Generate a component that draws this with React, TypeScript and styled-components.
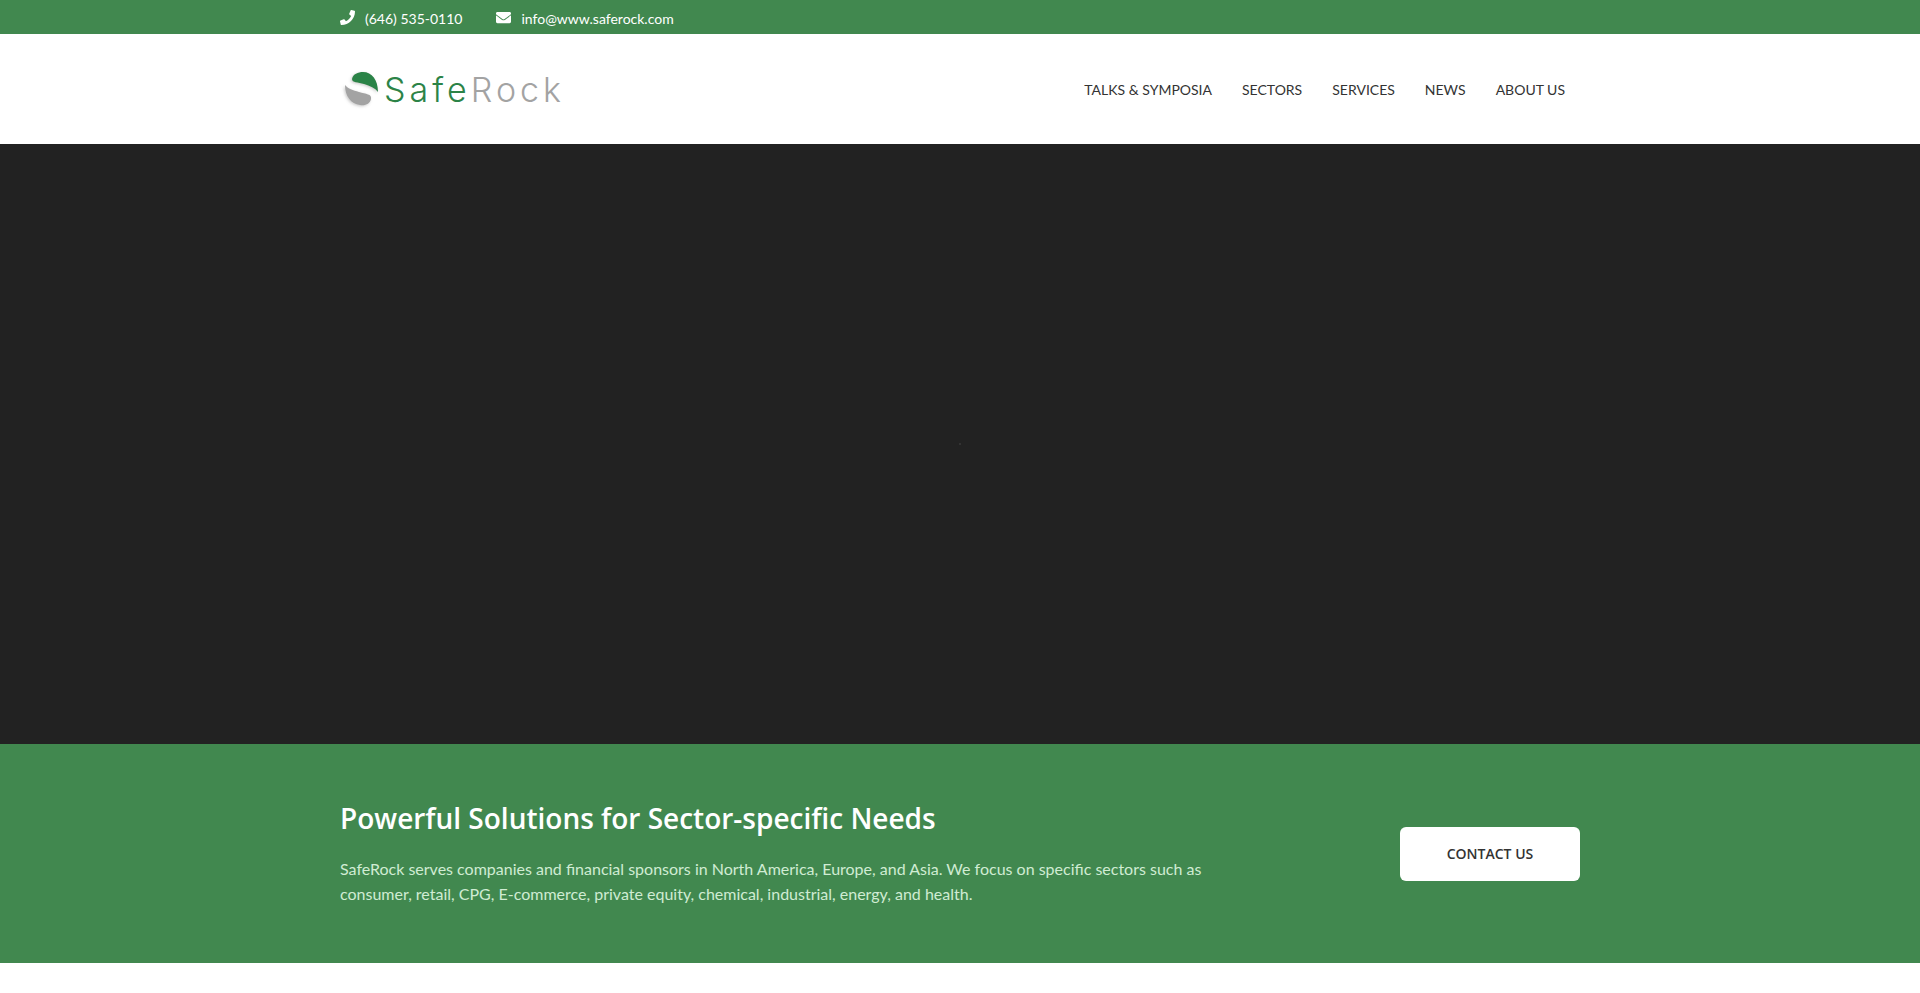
import React from "react";
import styled, { createGlobalStyle } from "styled-components";
import { FaEnvelope, FaPhone } from "react-icons/fa";

const GlobalStyle = createGlobalStyle`
  *, *::before, *::after { box-sizing: border-box; }
  body {
    margin: 0;
    background: #fff;
    color: #333;
    font-family: Lato, "Liberation Sans", sans-serif;
    font-size: 16px;
  }
`;

const Container = styled.div`
  max-width: 1240px;
  width: 100%;
  margin: 0 auto;
  display: flex;
  align-items: center;
`;

const TopBar = styled.div`
  background: #41884f;
`;

const ContactList = styled(Container)`
  height: 34px;
  gap: 34px;
`;

const ContactLink = styled.a`
  display: flex;
  align-items: center;
  gap: 10px;
  color: #fff;
  font-size: 14px;
  line-height: 24px;
  text-decoration: none;

  svg {
    width: 15px;
    height: 15px;
  }

  span {
    padding-top: 4px;
  }
`;

const Header = styled.header`
  background: #fff;
`;

const HeaderInner = styled(Container)`
  min-height: 110px;
  justify-content: space-between;
`;

const Logo = styled.a`
  display: flex;
  align-items: center;
  text-decoration: none;
`;

const Wordmark = styled.span<{ $tone: string }>`
  padding-top: 2px;
  color: ${({ $tone }) => $tone};
  font-family: Inter, "Liberation Sans", sans-serif;
  font-size: 34px;
  font-weight: 300;
  line-height: 40px;
  letter-spacing: 4px;
`;

const Nav = styled.nav`
  display: flex;
  padding-top: 2px;
`;

const NavLink = styled.a`
  padding: 0 15px;
  color: #333;
  font-size: 14px;
  line-height: 24px;
  text-transform: uppercase;
  text-decoration: none;
`;

const Hero = styled.section`
  display: flex;
  align-items: center;
  justify-content: center;
  min-height: 600px;
  background: #222;
`;

const Loader = styled.span`
  width: 2px;
  height: 2px;
  border-radius: 50%;
  background: #3a3a3a;
`;

const CallToAction = styled.section`
  background: #41884f;
`;

const CallInner = styled(Container)`
  padding: 54px 0;
  justify-content: space-between;
`;

const CallText = styled.div`
  max-width: 900px;
`;

const CallTitle = styled.h2`
  margin: 0 0 18px;
  color: #fff;
  font-family: "Open Sans", "Noto Sans", sans-serif;
  font-size: 28px;
  font-weight: 600;
  line-height: 40px;
`;

const CallCopy = styled.p`
  margin: 0 0 3px;
  color: #d0ecd3;
  font-size: 16px;
  line-height: 25px;
`;

const Button = styled.button`
  width: 180px;
  height: 54px;
  border: 0;
  border-radius: 6px;
  background: #fff;
  color: #333;
  font-family: "Open Sans", "Noto Sans", sans-serif;
  font-size: 14px;
  font-weight: 600;
  text-transform: uppercase;
  cursor: pointer;
`;

const navItems = ["Talks & Symposia", "Sectors", "Services", "News", "About Us"];

function LogoMark() {
  return (
    <svg width="44" height="44" viewBox="0 0 44 44" aria-hidden="true">
      <defs>
        <filter id="shade" x="-30%" y="-30%" width="160%" height="160%">
          <feDropShadow dx="-1" dy="1" stdDeviation="1.5" floodColor="#777" floodOpacity="0.4" />
        </filter>
      </defs>
      <g filter="url(#shade)">
        <path d="M12 12C13 7 18 5 23 5C32 5 38 13 38 25C35 21 30 19 24 17C18 15 12 16 12 12Z" fill="#2c8347" />
        <path d="M5 18C8 22 13 23 19 25C26 27 32 27 31 32C30 37 25 39 20 38C11 37 5 29 5 18Z" fill="#a3a3a3" />
      </g>
    </svg>
  );
}

export default function App() {
  return (
    <>
      <GlobalStyle />
      <TopBar>
        <ContactList>
          <ContactLink href="tel:+16465350110">
            <FaPhone aria-hidden="true" />
            <span>(646) 535-0110</span>
          </ContactLink>
          <ContactLink href="mailto:info@www.saferock.com">
            <FaEnvelope aria-hidden="true" />
            <span>info@www.saferock.com</span>
          </ContactLink>
        </ContactList>
      </TopBar>
      <Header>
        <HeaderInner>
          <Logo href="#home">
            <LogoMark />
            <Wordmark $tone="#2c8347">Safe</Wordmark>
            <Wordmark $tone="#a3a3a3">Rock</Wordmark>
          </Logo>
          <Nav aria-label="Main">
            {navItems.map((item) => (
              <NavLink key={item} href="#menu">
                {item}
              </NavLink>
            ))}
          </Nav>
        </HeaderInner>
      </Header>
      <main>
        <Hero aria-label="Slides">
          <Loader />
        </Hero>
        <CallToAction>
          <CallInner>
            <CallText>
              <CallTitle>Powerful Solutions for Sector-specific Needs</CallTitle>
              <CallCopy>
                SafeRock serves companies and financial sponsors in North America, Europe, and Asia. We focus on
                specific sectors such as consumer, retail, CPG, E-commerce, private equity, chemical, industrial,
                energy, and health.
              </CallCopy>
            </CallText>
            <Button type="button">Contact Us</Button>
          </CallInner>
        </CallToAction>
      </main>
    </>
  );
}
